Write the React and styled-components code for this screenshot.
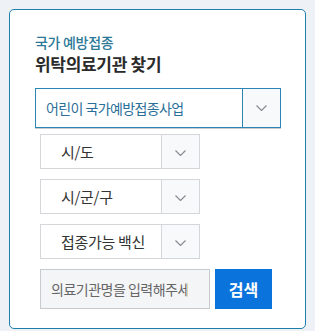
import React from 'react';
import styled, { createGlobalStyle } from 'styled-components';

const GlobalStyle = createGlobalStyle`
  html, body {
    margin: 0;
    padding: 0;
    background: #eef1f5;
    font-family: "Noto Sans CJK KR", "Noto Sans", sans-serif;
  }
`;

const Page = styled.div`
  padding: 9px;
  width: 315px;
  height: 331px;
  box-sizing: border-box;
`;

const Card = styled.section`
  width: 297px;
  height: 320px;
  box-sizing: border-box;
  background: #fff;
  border: 1px solid #1f7fab;
  border-radius: 5px;
  padding: 22px 0 0 25px;
  display: flex;
  flex-direction: column;
`;

const Heading = styled.div`
  display: flex;
  flex-direction: column;
  margin-bottom: 12px;
`;

const SubTitle = styled.span`
  font-size: 14px;
  font-weight: 500;
  color: #2b7898;
  letter-spacing: -0.3px;
  line-height: 20px;
`;

const Title = styled.h2`
  margin: 0;
  font-size: 17px;
  font-weight: 700;
  color: #2b2b2b;
  letter-spacing: -0.3px;
  line-height: 24px;
`;

const SelectBox = styled.div`
  display: flex;
  box-sizing: border-box;
  background: #fff;
  border: 1px solid ${p => (p.$main ? '#2a86b2' : '#d5d6da')};
  width: ${p => (p.$main ? '246px' : '160px')};
  height: ${p => (p.$main ? '40px' : '35px')};
  margin-left: ${p => (p.$main ? '0' : '5px')};
  box-shadow: ${p => (p.$main ? '0 1px 0 #c9cbcf' : 'none')};
`;

const SelectLabel = styled.div`
  flex: 1;
  display: flex;
  align-items: center;
  padding-left: ${p => (p.$main ? '10px' : '20px')};
  font-size: ${p => (p.$main ? '14px' : '15px')};
  letter-spacing: ${p => (p.$main ? '-0.6px' : '-0.3px')};
  color: ${p => (p.$main ? '#2a6f98' : '#333')};
`;

const ArrowButton = styled.div`
  width: 38px;
  display: flex;
  align-items: center;
  justify-content: center;
  background: #f8f9fb;
  border-left: 1px solid ${p => (p.$main ? '#2a86b2' : '#d5d6da')};
  padding-top: ${p => (p.$main ? '0' : '3px')};
  box-sizing: border-box;
`;

const SelectList = styled.div`
  display: flex;
  flex-direction: column;
  gap: 10px;
  margin-top: 6px;
`;

const SearchRow = styled.div`
  display: flex;
  gap: 5px;
  margin: 10px 0 0 5px;
`;

const SearchInput = styled.input`
  width: 170px;
  height: 40px;
  box-sizing: border-box;
  background: #f4f5f7;
  border: 1px solid #c9cacd;
  padding: 0 21px 0 10px;
  font-family: inherit;
  font-size: 14px;
  letter-spacing: -0.5px;
  color: #333;
  outline: none;

  &::placeholder {
    color: #666;
  }
`;

const SearchButton = styled.button`
  width: 57px;
  height: 40px;
  border: none;
  background: #0a73dc;
  color: #fff;
  font-family: inherit;
  font-size: 16px;
  font-weight: 700;
  cursor: pointer;
`;

const Chevron = () => (
  <svg width="11" height="6" viewBox="0 0 11 6">
    <path d="M0.5 0.5l5 5 5-5" fill="none" stroke="#8a8c90" strokeWidth="1.2" />
  </svg>
);

const Select = ({ main, label }) => (
  <SelectBox $main={main}>
    <SelectLabel $main={main}>{label}</SelectLabel>
    <ArrowButton $main={main}>
      <Chevron />
    </ArrowButton>
  </SelectBox>
);

const App = () => (
  <>
    <GlobalStyle />
    <Page>
      <Card>
        <Heading>
          <SubTitle>국가 예방접종</SubTitle>
          <Title>위탁의료기관 찾기</Title>
        </Heading>
        <Select main label="어린이 국가예방접종사업" />
        <SelectList>
          <Select label="시/도" />
          <Select label="시/군/구" />
          <Select label="접종가능 백신" />
        </SelectList>
        <SearchRow>
          <SearchInput placeholder="의료기관명을 입력해주세요" />
          <SearchButton>검색</SearchButton>
        </SearchRow>
      </Card>
    </Page>
  </>
);

export default App;
